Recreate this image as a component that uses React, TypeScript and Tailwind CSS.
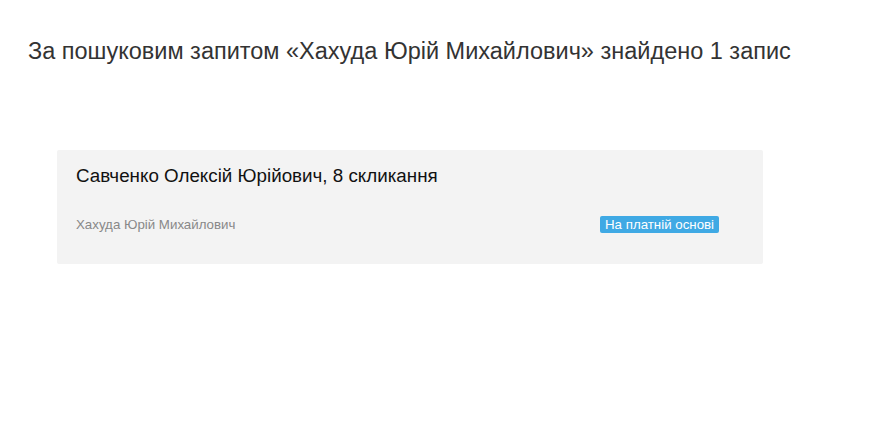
export default function App() {
  return (
    <div className="min-h-screen bg-white font-['Liberation_Sans'] text-[#333]">
      <div className="px-7 pt-[36px]">
        <h1 className="text-[23.5px] leading-[30px] font-normal">
          За пошуковим запитом «Хахуда Юрій Михайлович» знайдено 1 запис
        </h1>
      </div>
      <div className="pl-[57px] pr-[106px] pt-[84px]">
        <div className="bg-[#f3f3f3] rounded-[2px] px-[19px] pt-[13px] pb-[29px]">
          <h2 className="text-[18.8px] leading-[25px] text-[#111]">
            Савченко Олексій Юрійович, 8 скликання
          </h2>
          <div className="mt-[27px] flex items-center">
            <span className="w-[524px] text-[13.3px] text-[#888]">Хахуда Юрій Михайлович</span>
            <span className="bg-[#3fa9e4] text-white text-[13.3px] leading-[17px] px-[5px] rounded-[2px]">
              На платній основі
            </span>
          </div>
        </div>
      </div>
    </div>
  );
}
